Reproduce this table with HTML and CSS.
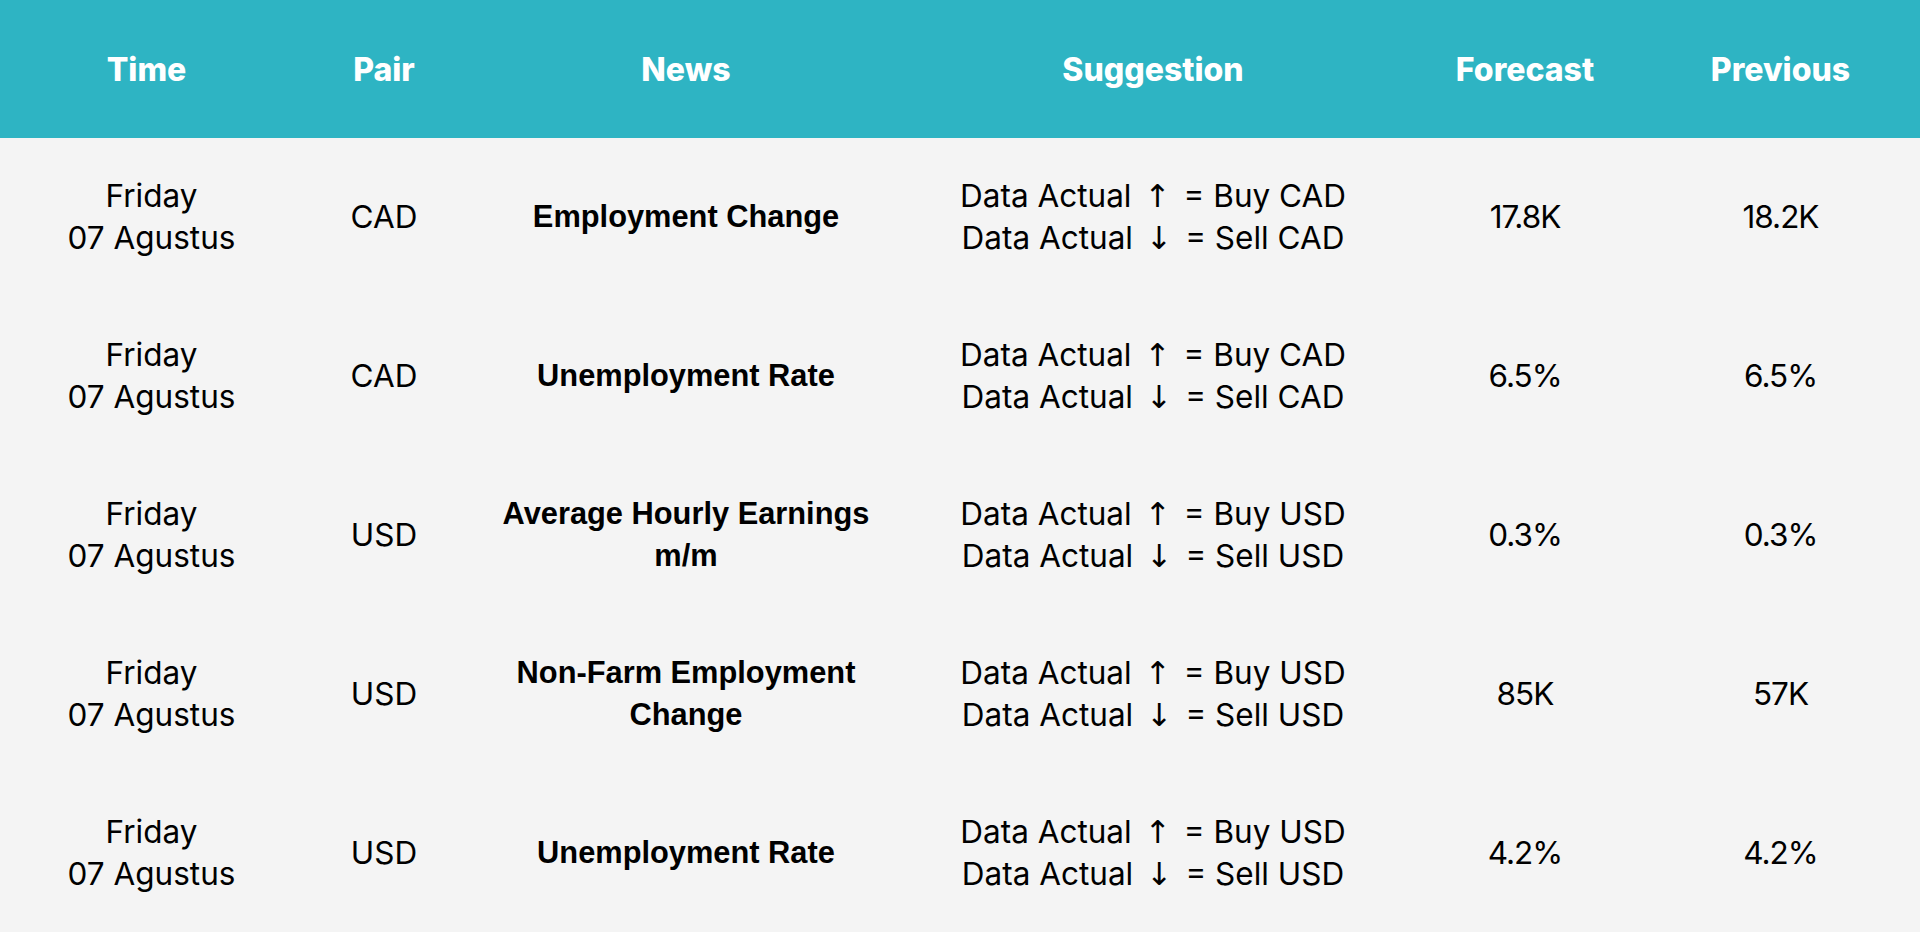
FILE: index.html
```html
<!DOCTYPE html>
<html lang="en">
<head>
    <meta charset="UTF-8">
    <meta name="viewport" content="width=device-width, initial-scale=1.0">
    <title>Economic Calendar</title>
    <link rel="stylesheet" href="styles.css">
</head>
<body>
    <table class="calendar">
        <colgroup>
            <col class="col-time">
            <col class="col-pair">
            <col class="col-news">
            <col class="col-suggestion">
            <col class="col-forecast">
            <col class="col-previous">
        </colgroup>
        <thead>
            <tr>
                <th>Time</th>
                <th>Pair</th>
                <th>News</th>
                <th>Suggestion</th>
                <th>Forecast</th>
                <th>Previous</th>
            </tr>
        </thead>
        <tbody>
            <tr>
                <td class="day">Friday<br>07 Agustus</td>
                <td>CAD</td>
                <td class="news">Employment Change</td>
                <td>Data Actual <span class="arrow">&#8593;</span> = Buy CAD<br>Data Actual <span class="arrow">&#8595;</span> = Sell CAD</td>
                <td class="num">17.8K</td>
                <td class="num">18.2K</td>
            </tr>
            <tr>
                <td class="day">Friday<br>07 Agustus</td>
                <td>CAD</td>
                <td class="news">Unemployment Rate</td>
                <td>Data Actual <span class="arrow">&#8593;</span> = Buy CAD<br>Data Actual <span class="arrow">&#8595;</span> = Sell CAD</td>
                <td class="num">6.5%</td>
                <td class="num">6.5%</td>
            </tr>
            <tr>
                <td class="day">Friday<br>07 Agustus</td>
                <td>USD</td>
                <td class="news">Average Hourly Earnings m/m</td>
                <td>Data Actual <span class="arrow">&#8593;</span> = Buy USD<br>Data Actual <span class="arrow">&#8595;</span> = Sell USD</td>
                <td class="num">0.3%</td>
                <td class="num">0.3%</td>
            </tr>
            <tr>
                <td class="day">Friday<br>07 Agustus</td>
                <td>USD</td>
                <td class="news">Non-Farm Employment Change</td>
                <td>Data Actual <span class="arrow">&#8593;</span> = Buy USD<br>Data Actual <span class="arrow">&#8595;</span> = Sell USD</td>
                <td class="num">85K</td>
                <td class="num">57K</td>
            </tr>
            <tr>
                <td class="day">Friday<br>07 Agustus</td>
                <td>USD</td>
                <td class="news">Unemployment Rate</td>
                <td>Data Actual <span class="arrow">&#8593;</span> = Buy USD<br>Data Actual <span class="arrow">&#8595;</span> = Sell USD</td>
                <td class="num">4.2%</td>
                <td class="num">4.2%</td>
            </tr>
        </tbody>
    </table>
</body>
</html>
```

FILE: styles.css
```css
body {
    margin: 0;
    background-color: #f4f4f4;
    font-family: Inter, "Open Sans", sans-serif;
    color: #000000;
}

.calendar {
    width: 1920px;
    height: 932px;
    border-collapse: collapse;
    table-layout: fixed;
}

.col-time { width: 293px; }
.col-pair { width: 182px; }
.col-news { width: 422px; }
.col-suggestion { width: 512px; }
.col-forecast { width: 232px; }
.col-previous { width: 279px; }

thead tr {
    height: 138px;
    background-color: #2eb4c3;
}

th {
    color: #ffffff;
    font-size: 32px;
    font-weight: 800;
    text-align: center;
    padding: 0;
}

tbody tr {
    height: 158.8px;
}

td {
    font-size: 31.5px;
    line-height: 42px;
    text-align: center;
    vertical-align: middle;
    padding: 0 16px;
}

td.day {
    padding: 0 10px 0 20px;
}

td.news {
    font-family: "Liberation Sans", Arial, sans-serif;
    font-weight: 700;
    font-size: 30.8px;
    padding: 0 12px;
}

td.num {
    letter-spacing: -1px;
}

.arrow {
    font-family: "DejaVu Sans", sans-serif;
    margin: 0 4px;
}
```
